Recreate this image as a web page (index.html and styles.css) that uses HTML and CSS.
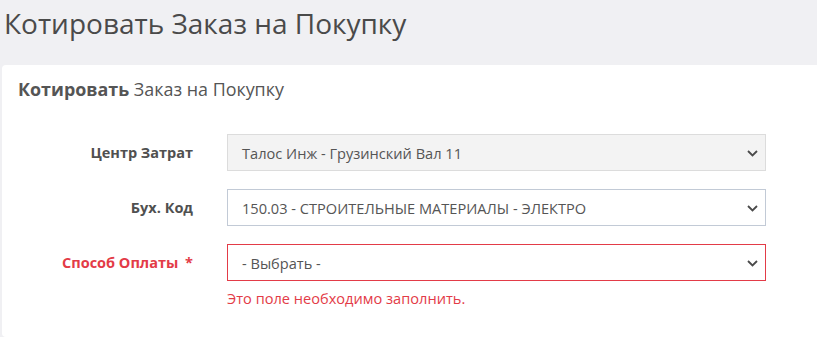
FILE: index.html
```html
<!DOCTYPE html>
<html lang="ru">
<head>
<meta charset="utf-8">
<link rel="stylesheet" href="styles.css">
</head>
<body>
<h1 class="page-title">Котировать Заказ на Покупку</h1>
<div class="card">
  <div class="card-head"><b>Котировать</b> Заказ на Покупку</div>
  <div class="form">
    <div class="row">
      <label class="lbl">Центр Затрат</label>
      <div class="field">
        <div class="select disabled"><span>Талос Инж - Грузинский Вал 11</span>
          <svg class="chev" width="11" height="7" viewBox="0 0 11 7"><path d="M1 1l4.5 4.5L10 1" fill="none" stroke="#4a4a4a" stroke-width="1.8"/></svg></div>
      </div>
    </div>
    <div class="row">
      <label class="lbl">Бух. Код</label>
      <div class="field">
        <div class="select"><span>150.03 - СТРОИТЕЛЬНЫЕ МАТЕРИАЛЫ - ЭЛЕКТРО</span>
          <svg class="chev" width="11" height="7" viewBox="0 0 11 7"><path d="M1 1l4.5 4.5L10 1" fill="none" stroke="#4a4a4a" stroke-width="1.8"/></svg></div>
      </div>
    </div>
    <div class="row">
      <label class="lbl err">Способ Оплаты <span class="req">*</span></label>
      <div class="field">
        <div class="select invalid"><span>- Выбрать -</span>
          <svg class="chev" width="11" height="7" viewBox="0 0 11 7"><path d="M1 1l4.5 4.5L10 1" fill="none" stroke="#4a4a4a" stroke-width="1.8"/></svg></div>
        <div class="error-msg">Это поле необходимо заполнить.</div>
      </div>
    </div>
  </div>
</div>
</body>
</html>
```
FILE: styles.css
```css
* { box-sizing: border-box; }
html, body { margin: 0; padding: 0; }
body {
  background: #f0f0f3;
  font-family: "Open Sans", "Liberation Sans", sans-serif;
  color: #555;
  width: 817px;
  height: 337px;
  overflow: hidden;
}
.page-title {
  margin: 0;
  padding: 3px 0 0 4px;
  font-size: 28px;
  font-weight: 400;
  line-height: 40px;
  color: #4a4a4a;
  height: 65px;
}
.card {
  margin-left: 2px;
  width: 840px;
  background: #fff;
  border-radius: 4px;
  padding: 11px 16px 0;
  height: 272px;
}
.card-head {
  font-size: 17.9px;
  line-height: 26px;
  color: #555;
}
.card-head b { font-weight: 700; }
.form {
  margin-top: 32px;
  display: flex;
  flex-direction: column;
  gap: 18px;
}
.row {
  display: flex;
  align-items: flex-start;
}
.lbl {
  width: 175px;
  text-align: right;
  font-size: 14.5px;
  font-weight: 700;
  line-height: 37px;
  color: #505050;
}
.lbl.err { color: #e33b47; }
.req { margin-left: 3px; }
.field {
  margin-left: 34px;
  width: 539px;
}
.select {
  height: 37px;
  border: 1px solid #c2cad6;
  background: #fff;
  display: flex;
  align-items: center;
  justify-content: space-between;
  padding: 0 7px 0 14px;
  font-size: 14.6px;
  color: #555;
}
.select.disabled {
  background: #f3f3f3;
  border-color: #dcdcdc;
}
.select.invalid { border-color: #e33b47; }
.chev { display: block; margin-top: 1px; }
.error-msg {
  margin-top: 7px;
  font-size: 14.6px;
  color: #e33b47;
  line-height: 20px;
}
```
